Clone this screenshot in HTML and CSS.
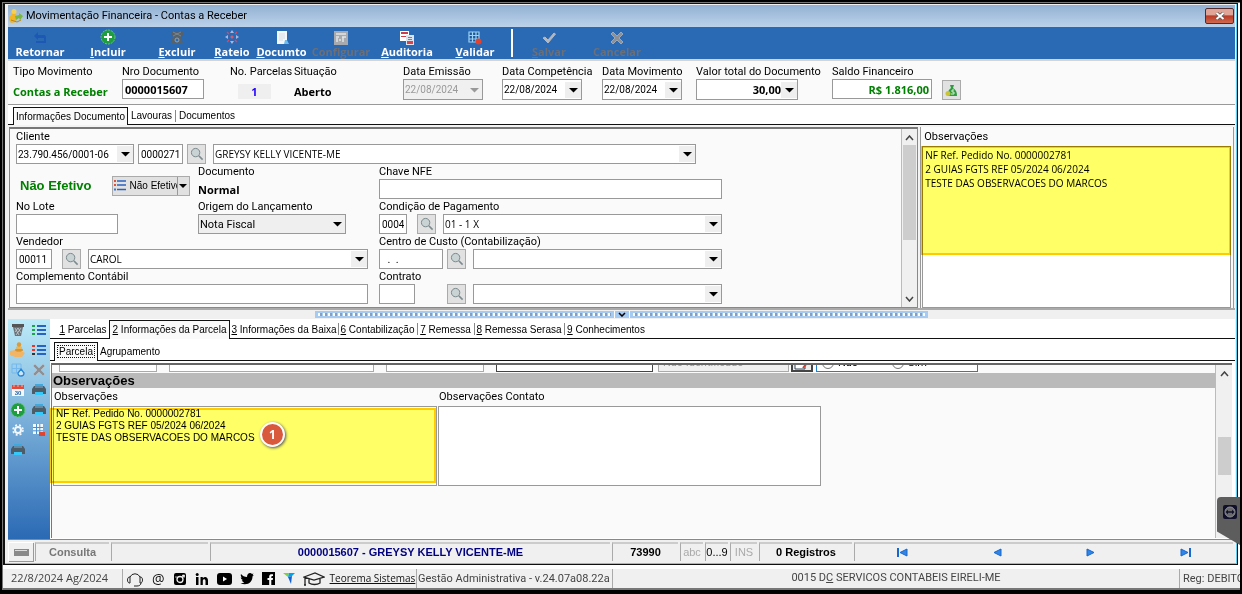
FILE: index.html
```html
<!DOCTYPE html>
<html lang="pt-BR">
<head>
<meta charset="utf-8">
<title>Movimentação Financeira - Contas a Receber</title>
<link rel="stylesheet" href="styles.css">
</head>
<body>
<svg class="sprite" aria-hidden="true">
  <symbol id="i-search" viewBox="0 0 14 14"><circle cx="5.6" cy="5.6" r="4.2" fill="#c9d3d4" stroke="#7b8a8e"/><path d="M8.8 8.8l3.800 3.800" stroke="#7b8a8e" stroke-width="1.600"/></symbol>
  <symbol id="i-printer" viewBox="0 0 14 14"><path d="M3 1h8v3H3z" fill="#3fa9dd"/><path d="M2 3h10l2 3v5H0V6z" fill="#4d5d68"/><path d="M3 3h8v2H3z" fill="#5f8ba8"/><path d="M3 9h8v3H3z" fill="#35c8f8"/></symbol>
  <symbol id="i-plus" viewBox="0 0 16 16"><circle cx="8" cy="8" r="7" fill="#1e9e3e" stroke="#6cc57e" stroke-dasharray="2 1"/><path d="M8 4v8M4 8h8" stroke="#fff" stroke-width="2"/></symbol>
  <symbol id="i-cross" viewBox="0 0 14 14"><path d="M3 1l4 4 4-4 2 2-4 4 4 4-2 2-4-4-4 4-2-2 4-4-4-4z" fill="#8d9196" stroke="#c3c6ca" stroke-width=".6"/></symbol>
  <symbol id="i-trash" viewBox="0 0 14 14"><path d="M1 1h12v3H1z" fill="#555"/><path d="M2 4h10l-2 9H4z" fill="#6c7378"/><path d="M4 5l4 7M7 5l3 5M10 5l-5 7M7 5l-3 4" stroke="#c8d0d4" stroke-width=".8"/></symbol>
</svg>
<div class="shell">
  <main class="window">
    <header class="title">
      <svg width="16" height="16" viewBox="0 0 16 16"><path d="M1 9l5-5 3 4-1 6-5 1-2-3z" fill="#f0b429"/><circle cx="6" cy="3.5" r="2.5" fill="#f6cf55"/><path d="M7 8l4-1V5l4 3-3 4-1-2-3 2z" fill="#79b83c"/><path d="M3 12l6 2 4-2" stroke="#b88717" fill="none"/></svg>
      <h1>Movimentação Financeira - Contas a Receber</h1>
      <button class="close" aria-label="Fechar"><svg width="10" height="8" viewBox="0 0 10 8"><path d="M1.500 1l7 6M8.500 1l-7 6" stroke="#555" stroke-width="3.400"/><path d="M1.500 1l7 6M8.500 1l-7 6" stroke="#fff" stroke-width="2"/></svg></button>
    </header>

    <nav class="toolbar">
      <button><svg width="14" height="14" viewBox="0 0 14 14"><path d="M1 5l4-4v3h7l1 2v6h-2V7H5v2z" fill="#1d59b4"/><path d="M3 10h8v2H3z" fill="#1d59b4"/></svg>Retornar</button>
      <button><svg width="16" height="16"><use href="#i-plus"/></svg><span><u>I</u>ncluir</span></button>
      <button><svg width="14" height="14" viewBox="0 0 14 14"><path d="M1 1h12v4H1z" fill="#55606a"/><path d="M3 5h8l2 8H1z" fill="#56636c"/><circle cx="7" cy="9" r="2" fill="#2a69b4" stroke="#98a2a8"/><path d="M3 1l8 4M11 1L3 5" stroke="#8a979f" stroke-width=".7"/></svg><span><u>E</u>xcluir</span></button>
      <button><svg width="16" height="16" viewBox="0 0 16 16"><path d="M8 1l2 3H6zM8 15l2-3H6zM1 8l3-2v4zM15 8l-3-2v4z" fill="#a9b7dd"/><path d="M6.500 8h3M8 6.500v3" stroke="#e25a6a" stroke-width="1.500"/><path d="M3 3l2 2M13 3l-2 2M3 13l2-2M13 13l-2-2" stroke="#d14b66" stroke-width="1.400"/></svg><span><u>R</u>ateio</span></button>
      <button><svg width="14" height="14" viewBox="0 0 14 14"><path d="M2 0h10v13H2z" fill="#f4f7fa"/><path d="M4 3h6M4 5h6M4 7h6M4 9h4" stroke="#d4dde6"/><path d="M9 13l1-4h2l2 4z" fill="#6cbcf0"/></svg><span><u>D</u>ocumto</span></button>
      <button disabled><svg width="14" height="14" viewBox="0 0 14 14"><path d="M0 0h14v14H0z" fill="#a7abb0"/><path d="M2 3h10M2 6h3M3 7v4M8 6h4M9 6v5M5 9h2" stroke="#e4e6e8" stroke-width="1.500"/></svg>Configurar</button>
      <button><svg width="14" height="14" viewBox="0 0 14 14"><path d="M0 0h9v10H0z" fill="#fff"/><path d="M1 1h7v2H1zM1 5h5v1H1z" fill="#d23b46"/><path d="M6 4h8v10H6z" fill="#dbe4ee"/><path d="M8 6h4v1H8zM8 8h4v1H8z" fill="#5a86c4"/><path d="M7 10h6v3H7z" fill="#d8434d"/></svg><span><u>A</u>uditoria</span></button>
      <button><svg width="14" height="14" viewBox="0 0 14 14"><path d="M1 1h10v10H1zM4.500 1v10M8 1v10M1 4.500h10M1 8h10" fill="#1f5598" stroke="#9bd4f6" stroke-width="1.200"/><circle cx="10.500" cy="10.500" r="3" fill="#e0432f"/></svg><span><u>V</u>alidar</span></button>
      <i class="bar"></i>
      <button disabled><svg width="14" height="14" viewBox="0 0 14 14"><path d="M1 7l2-1 3 3 6-7 1.500 1L6 12z" fill="#b3b8be" stroke="#b3b8be"/></svg><span><u>S</u>alvar</span></button>
      <button disabled><svg width="14" height="14"><use href="#i-cross"/></svg>Cancelar</button>
    </nav>

    <section class="summary">
      <div><b class="cap">Tipo Movimento</b><output class="green big">Contas a Receber</output></div>
      <div><label for="nro">Nro Documento</label><input id="nro" class="strong w82" value="0000015607"></div>
      <div><b class="cap">No. Parcelas</b><output class="parcels">1</output></div>
      <div><b class="cap">Situação</b><output class="big">Aberto</output></div>
      <div><label for="de">Data Emissão</label><select id="de" class="num w80" disabled><option>22/08/2024</option></select></div>
      <div><label for="dc">Data Competência</label><select id="dc" class="num w80"><option>22/08/2024</option></select></div>
      <div><label for="dm">Data Movimento</label><select id="dm" class="num w80"><option>22/08/2024</option></select></div>
      <div><label for="vt">Valor total do Documento</label><select id="vt" class="strong w102 right"><option>30,00</option></select></div>
      <div><label for="sf">Saldo Financeiro</label><input id="sf" class="strong w100 right green" value="R$ 1.816,00"></div>
      <button class="tool" aria-label="Saldo"><svg width="13" height="13" viewBox="0 0 13 13"><path d="M5 1h4L8 4c3 2 4 4 4 8H3c-1-3 0-6 3-8z" fill="#2f9d3f"/><circle cx="3" cy="9.500" r="2.500" fill="#c9c43a"/><path d="M9 6H7v2h2v2H6" stroke="#d9f0d0" fill="none"/></svg></button>
    </section>

    <div class="tabs doc-tabs" role="tablist">
      <button role="tab" aria-selected="true">Informações Documento</button>
      <button role="tab">Lavouras</button>
      <button role="tab" class="cut">Documentos</button>
    </div>

    <div class="upper">
      <section class="panel">
        <form class="form">
          <div class="field">
            <label for="cli">Cliente</label>
            <div class="line"><select id="cli" class="num w118"><option>23.790.456/0001-06</option></select><input class="num w45" aria-label="Código" value="0000271"><button type="button" class="tool" aria-label="Buscar cliente"><svg width="14" height="14"><use href="#i-search"/></svg></button><select class="grow" aria-label="Nome"><option>GREYSY KELLY VICENTE-ME</option></select></div>
          </div>
          <div class="half">
            <div class="pair">
              <div class="effect"><strong>Não Efetivo</strong><span class="split"><button type="button"><svg width="12" height="11" viewBox="0 0 12 11"><path d="M0 1h2M0 5h2" stroke="#e2503c" stroke-width="2"/><path d="M0 9.500h2" stroke="#3a76c8" stroke-width="2"/><path d="M3 1h9M3 5h9M3 9.500h9" stroke="#2a62c0" stroke-width="1.600"/></svg>Não Efetivo</button><button type="button" aria-label="Opções" class="drop"></button></span></div>
              <div class="field"><b class="cap">Documento</b><output class="normal">Normal</output></div>
              <div class="field"><label for="lote">No Lote</label><div class="line"><input id="lote" class="w102"></div></div>
              <div class="field"><label for="orig">Origem do Lançamento</label><div class="line"><select id="orig" class="w148 gray"><option>Nota Fiscal</option></select></div></div>
            </div>
            <div class="field"><label for="vend">Vendedor</label><div class="line wide"><input id="vend" class="num w36" value="00011"><button type="button" class="tool" aria-label="Buscar vendedor"><svg width="14" height="14"><use href="#i-search"/></svg></button><select class="grow" aria-label="Nome do vendedor"><option>CAROL</option></select></div></div>
            <div class="field"><label for="comp">Complemento Contábil</label><div class="line"><input id="comp" class="grow"></div></div>
          </div>
          <div class="half">
            <div class="field"><label for="nfe">Chave NFE</label><div class="line"><input id="nfe" class="grow"></div></div>
            <div class="field"><label for="cond">Condição de Pagamento</label><div class="line wide"><input id="cond" class="num w28" value="0004"><button type="button" class="tool" aria-label="Buscar condição"><svg width="14" height="14"><use href="#i-search"/></svg></button><select class="grow" aria-label="Condição"><option>01 - 1 X</option></select></div></div>
            <div class="field"><label for="cc">Centro de Custo (Contabilização)</label><div class="line"><input id="cc" class="w64" value="  .  ."><button type="button" class="tool" aria-label="Buscar centro"><svg width="14" height="14"><use href="#i-search"/></svg></button><select class="grow" aria-label="Centro de custo"><option></option></select></div></div>
            <div class="field"><label for="ctr">Contrato</label><div class="line"><span class="w64"><input id="ctr" class="w36"></span><button type="button" class="tool" aria-label="Buscar contrato"><svg width="14" height="14"><use href="#i-search"/></svg></button><select class="grow" aria-label="Descrição do contrato"><option></option></select></div></div>
          </div>
        </form>
        <div class="scroll"><svg width="9" height="6" viewBox="0 0 9 6"><path d="M1 5l3.500-4L8 5" fill="none" stroke="#444" stroke-width="1.500"/></svg><i class="thumb tall"></i><svg class="end" width="9" height="6" viewBox="0 0 9 6"><path d="M1 1l3.500 4L8 1" fill="none" stroke="#444" stroke-width="1.500"/></svg></div>
      </section>
      <section class="notes">
        <label for="obs">Observações</label>
        <div class="area"><textarea id="obs">NF Ref. Pedido No. 0000002781
2 GUIAS FGTS REF 05/2024 06/2024
TESTE DAS OBSERVACOES DO MARCOS</textarea><i class="mark mark-top"></i></div>
      </section>
    </div>

    <div class="splitter"><div class="grip"><i></i><button aria-label="Recolher"><svg width="8" height="5" viewBox="0 0 8 5"><path d="M1 1l3 3 3-3" fill="none" stroke="#000" stroke-width="1.500"/></svg></button><i></i></div></div>

    <div class="lower">
      <aside class="side">
        <button aria-label="Lixeira"><svg width="14" height="14"><use href="#i-trash"/></svg></button>
        <button aria-label="Lista verde"><svg width="14" height="12" viewBox="0 0 14 12"><path d="M0 2h3M0 6h3M0 10h3" stroke="#1fa34a" stroke-width="2"/><path d="M5 2h9M5 6h9M5 10h9" stroke="#2763c4" stroke-width="1.800"/></svg></button>
        <button aria-label="Receber"><svg width="16" height="16" viewBox="0 0 16 16"><path d="M0 9l5-1 3 2h5l2 1-3 4H5l-5-2z" fill="#f1b565"/><ellipse cx="9" cy="8" rx="4" ry="1.800" fill="#d8942f"/><ellipse cx="9" cy="5.500" rx="3" ry="1.600" fill="#efb44d"/><circle cx="9" cy="2.500" r="2.200" fill="#dd9a35"/></svg></button>
        <button aria-label="Lista vermelha"><svg width="14" height="12" viewBox="0 0 14 12"><path d="M0 2h3M0 6h3" stroke="#e0392b" stroke-width="2"/><path d="M0 10h3" stroke="#333" stroke-width="2"/><path d="M5 2h9M5 6h9M5 10h9" stroke="#2763c4" stroke-width="1.800"/></svg></button>
        <button aria-label="Atualizar"><svg width="14" height="14" viewBox="0 0 14 14"><path d="M1 1h9v9H1zM5.500 1v9M1 5.500h9" fill="none" stroke="#74b8ee"/><path d="M10 6l3 4a3 3 0 1 1-6 0z" fill="#cfe6fa" stroke="#2787d8" stroke-width="1.300"/></svg></button>
        <button aria-label="Cancelar item"><svg width="14" height="14"><use href="#i-cross"/></svg></button>
        <button aria-label="Calendário"><svg width="12" height="12" viewBox="0 0 12 12"><path d="M0 1h12v11H0z" fill="#f5f8fb"/><path d="M0 1h12v4H0z" fill="#e14a3c"/><path d="M2 0v3M6 0v3M10 0v3" stroke="#f3b0a8"/><text x="6" y="11" font-size="6" font-weight="700" font-family="Liberation Sans" text-anchor="middle" fill="#2763a8">30</text></svg></button>
        <button aria-label="Imprimir"><svg width="14" height="14"><use href="#i-printer"/></svg></button>
        <button aria-label="Adicionar"><svg width="16" height="16"><use href="#i-plus"/></svg></button>
        <button aria-label="Imprimir recibo"><svg width="14" height="14"><use href="#i-printer"/></svg></button>
        <button aria-label="Configurar"><svg width="12" height="12" viewBox="0 0 12 12"><circle cx="6" cy="6" r="3" fill="none" stroke="#f2f8fd" stroke-width="2"/><circle cx="6" cy="6" r="5" fill="none" stroke="#f2f8fd" stroke-width="1.500" stroke-dasharray="2 2"/></svg></button>
        <button aria-label="Excluir grade"><svg width="14" height="14" viewBox="0 0 14 14"><path d="M1 1h10v10H1z" fill="#f2f8fd"/><path d="M4.500 1v10M7.800 1v10M1 4.500h10M1 7.800h10" stroke="#4a90d0"/><path d="M7 9h6v4H7z" fill="#e0432f"/></svg></button>
        <button aria-label="Imprimir boleto"><svg width="14" height="14"><use href="#i-printer"/></svg></button>
      </aside>
      <div class="detail">
        <div class="tabs item-tabs" role="tablist">
          <button role="tab"><u>1</u> Parcelas</button>
          <button role="tab" aria-selected="true"><u>2</u> Informações da Parcela</button>
          <button role="tab"><u>3</u> Informações da Baixa</button>
          <button role="tab" class="cut"><u>6</u> Contabilização</button>
          <button role="tab" class="cut"><u>7</u> Remessa</button>
          <button role="tab" class="cut"><u>8</u> Remessa Serasa</button>
          <button role="tab" class="cut"><u>9</u> Conhecimentos</button>
        </div>
        <div class="tabs sub-tabs" role="tablist">
          <button role="tab" aria-selected="true"><span>Parcela</span></button>
          <button role="tab">Agrupamento</button>
        </div>
        <section class="panel inset">
          <div class="body">
            <div class="clipped">
              <i class="stub s1"></i><i class="stub s2"></i><i class="stub s3"></i><i class="stub s4"></i><i class="stub s5">Não Identificado</i><i class="stub s6"><svg width="18" height="17" viewBox="0 0 18 17"><path d="M2 6h10v9H2z" fill="#fff" stroke="#345"/><path d="M10 14l4-5" stroke="#e03a2c" stroke-width="2"/></svg></i>
              <span class="stub s7"><label><input type="radio" name="r">Não</label><label><input type="radio" name="r">Sim</label></span>
            </div>
            <h2>Observações</h2>
            <div class="two">
              <div><label for="o1">Observações</label><div class="area"><textarea id="o1">NF Ref. Pedido No. 0000002781
2 GUIAS FGTS REF 05/2024 06/2024
TESTE DAS OBSERVACOES DO MARCOS</textarea><i class="mark mark-low"></i><b class="badge">1</b></div></div>
              <div><label for="o2">Observações Contato</label><div class="area"><textarea id="o2"></textarea></div></div>
            </div>
          </div>
          <div class="scroll"><svg width="9" height="6" viewBox="0 0 9 6"><path d="M1 5l3.500-4L8 5" fill="none" stroke="#444" stroke-width="1.500"/></svg><i class="thumb short"></i></div>
        </section>
      </div>
    </div>

    <footer class="status">
      <button aria-label="Painel"><svg width="15" height="7" viewBox="0 0 15 7"><path d="M0 0h15v7H0z" fill="#8a8a8a"/><path d="M1 1h12v1H1z" fill="#ddd"/></svg></button>
      <span class="mute">Consulta</span><span></span>
      <span class="navy">0000015607 - GREYSY KELLY VICENTE-ME</span>
      <span class="bold">73990</span><span class="off">abc</span><span>0...9</span><span class="off">INS</span>
      <span class="bold">0 Registros</span>
      <nav class="pager">
        <button aria-label="Primeiro"><svg width="11" height="9" viewBox="0 0 11 9"><path d="M1 0v9" stroke="#1767cf" stroke-width="2"/><path d="M10 1v7L3 4.500z" fill="#2f86e6" stroke="#1767cf"/></svg></button>
        <button aria-label="Anterior"><svg width="9" height="9" viewBox="0 0 9 9"><path d="M8 1v7L1 4.500z" fill="#2f86e6" stroke="#1767cf"/></svg></button>
        <button aria-label="Próximo"><svg width="9" height="9" viewBox="0 0 9 9"><path d="M1 1v7l7-3.500z" fill="#2f86e6" stroke="#1767cf"/></svg></button>
        <button aria-label="Último"><svg width="11" height="9" viewBox="0 0 11 9"><path d="M10 0v9" stroke="#1767cf" stroke-width="2"/><path d="M1 1v7l7-3.500z" fill="#2f86e6" stroke="#1767cf"/></svg></button>
      </nav>
    </footer>
  </main>

  <footer class="system">
    <span class="date">22/8/2024 Ag/2024</span>
    <div class="links">
      <a href="#" aria-label="Suporte"><svg width="18" height="18" viewBox="0 0 18 18" fill="none" stroke="#222"><path d="M4 7a5.500 5.500 0 0 1 10 0M3 7c-2 1-2 5 0 6h1V7zM15 7c2 1 2 5 0 6h-1V7zM15 13c0 2-2 3-4 3M8 16h3"/></svg></a>
      <a href="#" aria-label="E-mail" class="at">@</a>
      <a href="#" aria-label="Instagram"><svg width="14" height="14" viewBox="0 0 14 14"><rect x="1" y="1" width="12" height="12" rx="2"/><circle cx="7" cy="7.500" r="3" fill="none" stroke="#eee" stroke-width="1.300"/><path d="M9.500 3h2v1.500h-2zM2 5h2.500M9.500 5H12" fill="#eee" stroke="#eee" stroke-width=".7"/></svg></a>
      <a href="#" aria-label="LinkedIn"><svg width="14" height="14" viewBox="0 0 14 14"><circle cx="2.200" cy="2.500" r="1.500"/><path d="M1 5h2.500v8H1zM5.500 5h2.300v1.200C9.500 4 13 4.500 13 8.500V13h-2.500V9c0-2.500-2.700-2.500-2.700 0v4H5.500z"/></svg></a>
      <a href="#" aria-label="YouTube"><svg width="15" height="12" viewBox="0 0 15 12"><rect x="0" y="0" width="15" height="12" rx="3"/><path d="M6 3.500v5L10 6z" fill="#fff"/></svg></a>
      <a href="#" aria-label="Twitter"><svg width="14" height="12" viewBox="0 0 14 12"><path d="M1 1c1.500 2 3.500 3 6 3 0-4 3.500-5 5-3l1.500-.5-1 1.700 1.300-.2-1.300 1.500C12.500 9 8 13 .5 10.500c1.500 0 3-.5 3.800-1.200C3 9 2 8.300 1.800 7.300h1.300C1.500 6.500.8 5.500.8 4.300l1.200.4C.7 3.500.5 2.300 1 1z"/></svg></a>
      <a href="#" aria-label="Facebook"><svg width="13" height="13" viewBox="0 0 13 13"><path d="M0 0h13v13H0z"/><path d="M7.200 13V8H5.500V6h1.700V4.500c0-2 1.300-2.500 3.800-2.300v1.900c-1.300 0-1.700 0-1.700 1V6H11l-.3 2H9.300v5z" fill="#fff"/></svg></a>
      <a href="#" aria-label="Teorema"><svg width="12" height="11" viewBox="0 0 12 11"><path d="M0 0h6L5 4z" fill="#7fd13b"/><path d="M6 0h6L9 3 5 4z" fill="#00a3e8"/><path d="M5 4l4-1-1 8z" fill="#1260d8"/></svg></a>
      <a href="#" aria-label="Universidade"><svg width="22" height="16" viewBox="0 0 22 16" fill="none" stroke="#222" stroke-width="1.300"><path d="M1 6l11-4 9 4-10 3zM6 8v4c3 2 8 2 11 0V8M2 6v8M1 14h2"/></svg></a>
      <a href="#" class="site">Teorema Sistemas</a>
    </div>
    <span class="ver">Gestão Administrativa - v.24.07a08.22a</span>
    <span class="corp">0015 D<u>C</u> SERVICOS CONTABEIS EIRELI-ME</span>
    <span class="reg">Reg: DEBITO</span>
  </footer>
</div>
<button class="remote" aria-label="Acesso remoto"><svg width="14" height="14" viewBox="0 0 14 14"><rect width="14" height="14" rx="2" fill="#10102a"/><circle cx="7" cy="7" r="5" fill="#6a6a6e" stroke="#8f8f96"/><path d="M2.500 7L5 4.800v1.500h4V4.800L11.500 7 9 9.200V7.700H5v1.500z" fill="#10102a"/></svg></button>
</body>
</html>
```

FILE: styles.css
```css
* { box-sizing: border-box; }
html, body { margin: 0; }
body {
  --ui: Roboto, "Noto Sans", sans-serif;
  --wide: "Open Sans", "Noto Sans", sans-serif;
  --sys: "Liberation Sans", Arial, sans-serif;
  --line: #999;
  display: flex;
  min-height: 100vh;
  padding: 2px 2px 4px;
  background: #000;
  color: #000;
  font: 11px/15px var(--ui);
  position: relative;
  overflow-x: hidden;
}
button, input, select, textarea { font: inherit; color: inherit; margin: 0; border-radius: 0; }
button { padding: 0; border: 0; background: none; }
svg { display: block; flex: none; }
.sprite { position: absolute; width: 0; height: 0; }
label, .cap { display: block; font-weight: 400; white-space: nowrap; }
i { font-style: normal; }

.shell { flex: 1; min-width: 0; display: flex; flex-direction: column; background: #fff; border: 1px solid #777; border-width: 1px 0 2px 1px; }
.window { flex: 1; display: flex; flex-direction: column; margin-right: 2px; margin-bottom: 4px; border: solid #111; border-width: 1px 1px 1px 2px; box-shadow: inset -1px -1px #5fd0ee; padding: 1px 2px 1px 3px; background: #f0f0f0; }

.title { display: flex; align-items: center; gap: 2px; height: 22px; background: linear-gradient(#92b1d3, #bcd2ea); }
.title h1 { flex: 1; margin: 0; font: 11px/16px var(--ui); white-space: nowrap; }
.close { display: grid; place-items: center; width: 29px; height: 16px; margin-right: 1px; border: 1px solid #552a2a; border-radius: 2px; background: linear-gradient(#e0a596 40%, #b93b26 50%, #cf6a50); }

.toolbar { display: grid; grid-template-columns: 64px 72px 66px 44px 55px 64px 68px 68px 6px 68px 68px; height: 32px; background: #2a69b4; color: #fff; font: 700 11px/13px var(--wide); }
.toolbar button { display: flex; flex-direction: column; align-items: center; justify-content: flex-end; padding-bottom: 1px; white-space: nowrap; }
.toolbar button:disabled { color: #6a6f78; }
.bar { width: 2px; height: 28px; margin: 2px; background: #fff; }

.summary { display: grid; grid-template-columns: 109px 108px 64px 109px 99px 100px 94px 136px 110px auto; justify-content: start; height: 46px; padding: 3px 0 0 5px; border-top: 2px solid #d6d3d3; border-bottom: 1px solid var(--line); background: #fafafa; }
.summary input, .summary select { height: 21px; }
.summary .tool { margin-top: 16px; }
.big { display: block; font: 700 11px/26px var(--wide); white-space: nowrap; }
.green { color: #008000; }
.parcels { display: block; width: 33px; margin: 5px 0 0 8px; background: #efefef; color: #20f; font: 700 11px/15px var(--wide); text-align: center; }
.right { text-align: right; text-align-last: right; }

input:not([type]), select { height: 20px; min-width: 0; padding: 0 2px; border: 1px solid var(--line); background: #fff; }
select { appearance: none; padding: 0 16px 0 1px; font: 10px/15px var(--wide); background: #fff url("data:image/svg+xml,%3Csvg xmlns='http://www.w3.org/2000/svg' width='16' height='16'%3E%3Cpath d='M0 0h16v16H0z' fill='%23efefef'/%3E%3Cpath d='M4 6h9L8.500 10.500z'/%3E%3C/svg%3E") right center no-repeat; }
select:disabled { background: #f0f0f0 url("data:image/svg+xml,%3Csvg xmlns='http://www.w3.org/2000/svg' width='16' height='16'%3E%3Cpath d='M4 6h9L8.500 10.500z' fill='%23999'/%3E%3C/svg%3E") right center no-repeat; color: #999; opacity: 1; }
select.gray { background-color: #efefef; font: 11px/15px var(--ui); }
input.num, select.num { font: 10px/15px var(--ui); }
input.strong, select.strong { font: 700 11px/15px var(--wide); }
.tool { display: grid; place-items: center; flex: none; width: 19px; height: 20px; border: 1px solid #aaa; background: #e1e1e1; }
.w28 { width: 28px; } .w36 { width: 36px; } .w45 { width: 45px; } .w64 { width: 64px; }
.w80 { width: 80px; } .w82 { width: 82px; } .w100 { width: 100px; } .w102 { width: 102px; }
.w118 { width: 118px; } .w148 { width: 148px; }
.grow { flex: 1; }

.tabs { display: grid; background: #fff; font: 10px/16px var(--sys); border-bottom: 1px solid #111; }
.tabs button { white-space: nowrap; text-align: center; padding-top: 1px; }
.tabs button[aria-selected] { margin-bottom: -1px; padding-top: 0; border: 1px solid #111; border-bottom: 0; background: #fafafa; }
.tabs .cut { background: linear-gradient(#888, #888) left center / 1px 12px no-repeat; }
.doc-tabs { grid-template-columns: 115px 47px 64px; height: 20px; padding: 2px 0 0 5px; }
.item-tabs { grid-template-columns: 52px 121px 108px 79px 57px 90px 84px; height: 20px; padding: 1px 0 0 7px; }
.sub-tabs { grid-template-columns: 44px 64px; height: 22px; padding: 3px 0 0 4px; }
.sub-tabs span { border: 1px dotted #111; padding: 0 1px; }

.upper { display: grid; grid-template-columns: minmax(0, 910fr) minmax(0, 314fr); gap: 2px; padding: 2px 1px 0; background: #f3f3f3; border-bottom: 2px solid #aaa; }
.panel { display: flex; min-width: 0; border: 1px solid #888; border-top: 2px solid #777; background: #fafafa; }
.form { flex: 1; display: grid; grid-template-columns: 352px 343px; column-gap: 11px; align-content: start; padding: 0 0 3px 6px; }
.form > .field { grid-column: 1 / 3; width: 680px; }
.field { height: 35px; }
.line { display: flex; gap: 4px; height: 20px; }
.line > .tool { margin-right: 3px; }
.wide { gap: 10px; }
.wide > .tool { margin-right: -3px; }
.pair { display: grid; grid-template-columns: 182px 1fr; }
.effect { display: flex; align-items: center; gap: 20px; padding: 8px 0 0 4px; font: 10px/16px var(--sys); }
.effect strong { color: #008000; font-size: 13px; white-space: nowrap; }
.split { display: flex; width: 78px; height: 20px; border: 1px solid #aaa; background: #e1e1e1; }
.split button { flex: 1; display: flex; align-items: center; gap: 4px; padding-left: 1px; min-width: 0; overflow: hidden; white-space: nowrap; }
.split .drop { flex: none; width: 12px; border-left: 1px solid #999; }
.drop::before { content: ""; border: 4px solid transparent; border-top-color: #000; border-bottom: 0; }
.normal { display: block; font: 700 11px/22px var(--wide); }

.scroll { flex: none; display: flex; flex-direction: column; align-items: center; width: 16px; padding: 6px 0 5px; background: #f0f0f0; border-left: 1px solid #bbb; }
.thumb { width: 13px; background: #cdcdcd; }
.tall { height: 95px; margin-top: 4px; }
.short { height: 38px; margin-top: 60px; }
.end { margin-top: auto; }

.notes { display: flex; flex-direction: column; min-width: 0; padding: 2px 2px 0 1px; border: solid #999; border-width: 0 1px; background: #fafafa; }
.notes > label { padding: 0 2px 2px; }
.area { position: relative; display: flex; flex: 1; }
textarea { flex: 1; min-width: 0; resize: none; padding: 1px 2px; border: 1px solid var(--line); background: #fff; white-space: pre; overflow: hidden; font: 10px/14px var(--wide); outline: 0; }
.mark { position: absolute; background: #ffff66; border: 2px solid #ffcc00; mix-blend-mode: multiply; pointer-events: none; }
.mark-top { inset: 0 0 auto -1px; height: 109px; }
.mark-low { inset: 2px 1px 3px -3px; }
.badge { position: absolute; left: 207px; top: 16px; width: 25px; height: 25px; border: 2px solid #fff; border-radius: 50%; background: #d9593d; color: #fff; font: 700 12px/21px var(--wide); text-align: center; box-shadow: 1px 1px 3px #555; }

.splitter { height: 9px; padding-top: 1px; }
.grip { display: flex; width: 50%; height: 7px; margin: 0 auto; background: #a6cbf3; }
.grip i { flex: 1; margin: 2px 3px; background: linear-gradient(90deg, #fff 2px, #8b9fb8 2px 4px, transparent 4px) 0 0 / 5px 3px; }
.grip button { display: grid; place-items: center; width: 16px; border: solid #fff; border-width: 0 1px; }

.lower { flex: 1; display: flex; background: #fff; border-bottom: 1px solid #888; }
.side { flex: none; display: grid; grid-template-columns: 20px 21px; grid-auto-rows: 20px; align-content: start; width: 42px; padding-top: 1px; background: linear-gradient(#bdebf9, #2a69b4); }
.side button { display: grid; place-items: center; }
.detail { flex: 1; min-width: 0; display: flex; flex-direction: column; }
.inset { flex: 1; margin: 2px 3px 1px 1px; border: 0; border-left: 1px solid #777; border-top: 2px solid #666; }
.inset .scroll { width: 17px; }
.body { flex: 1; min-width: 0; }
.clipped { display: flex; align-items: flex-end; height: 8px; padding-bottom: 1px; overflow: hidden; padding-left: 7px; }
.stub { flex: none; height: 18px; border: 1px solid #aaa; background: #fff; white-space: nowrap; line-height: 16px; }
.s1 { width: 98px; margin-right: 12px; }
.s2 { width: 205px; margin-right: 12px; }
.s3 { width: 98px; margin-right: 12px; }
.s4 { width: 157px; margin-right: 5px; border-color: #444; }
.s5 { width: 131px; margin-right: 2px; padding-left: 4px; background: #f0f0f0; color: #999; }
.s6 { width: 22px; margin-right: 3px; border: 2px solid #444; border-top: 0; background: #eee; }
.s7 { display: flex; gap: 34px; width: 162px; padding-left: 5px; border-color: #1d7fd0; }
.s7 label { display: flex; align-items: center; gap: 4px; }
.s7 input { width: 12px; height: 12px; margin: 0; }
.body h2 { margin: 0; padding-left: 1px; background: #bababa; font: 700 13px/15px var(--sys); }
.two { display: grid; grid-template-columns: 385px 384px; padding: 1px 0 0 1px; }
.two label { padding: 0 1px 2px; }
.two .area { height: 80px; margin-right: 1px; }
.two textarea { font: 10px/12px var(--sys); }

.status { display: grid; grid-template-columns: 27px 76px 99px 402px 68px 25px 25px 29px 95px 1fr; height: 23px; padding: 1px 0; font: 11px/17px var(--sys); text-align: center; }
.status > * { margin: 1px 2px 1px 0; border-left: 1px solid #aaa; border-top: 2px solid #ccc; white-space: nowrap; }
.status > button { display: grid; place-items: center; border: solid #fff; border-width: 1px 0 0 1px; box-shadow: 1px 1px #999; }
.mute { color: #777; font-weight: 700; }
.navy { color: #000080; font-weight: 700; }
.bold { font-weight: 700; }
.off { color: #aaa; }
.pager { display: flex; justify-content: space-around; }

.system { display: grid; grid-template-columns: 120px 294px 196px 1fr 60px; height: 19px; background: #f0f0f0; color: #444; line-height: 19px; white-space: nowrap; }
.system > * { border-right: 1px solid #aaa; overflow: hidden; }
.date { padding-left: 8px; font-family: var(--wide); line-height: 17px; }
.links { display: flex; align-items: center; gap: 8px; padding-left: 3px; }
.links a { color: #111; text-decoration: none; }
.links .at { font: 14px/18px var(--wide); }
.links .site { font: 10px/19px var(--wide); text-decoration: underline; margin-left: -3px; }
.ver { padding-left: 1px; }
.corp { text-align: center; line-height: 17px; }
.system .reg { padding-left: 3px; border: 0; }

.remote { display: flex; align-items: flex-start; position: absolute; right: 2px; top: 497px; width: 23px; height: 48px; padding: 8px 0 0 6px; background: #5d5d5d; border-radius: 4px 0 0 0; clip-path: polygon(0 0, 100% 0, 100% 100%, 0 72%); }
```
